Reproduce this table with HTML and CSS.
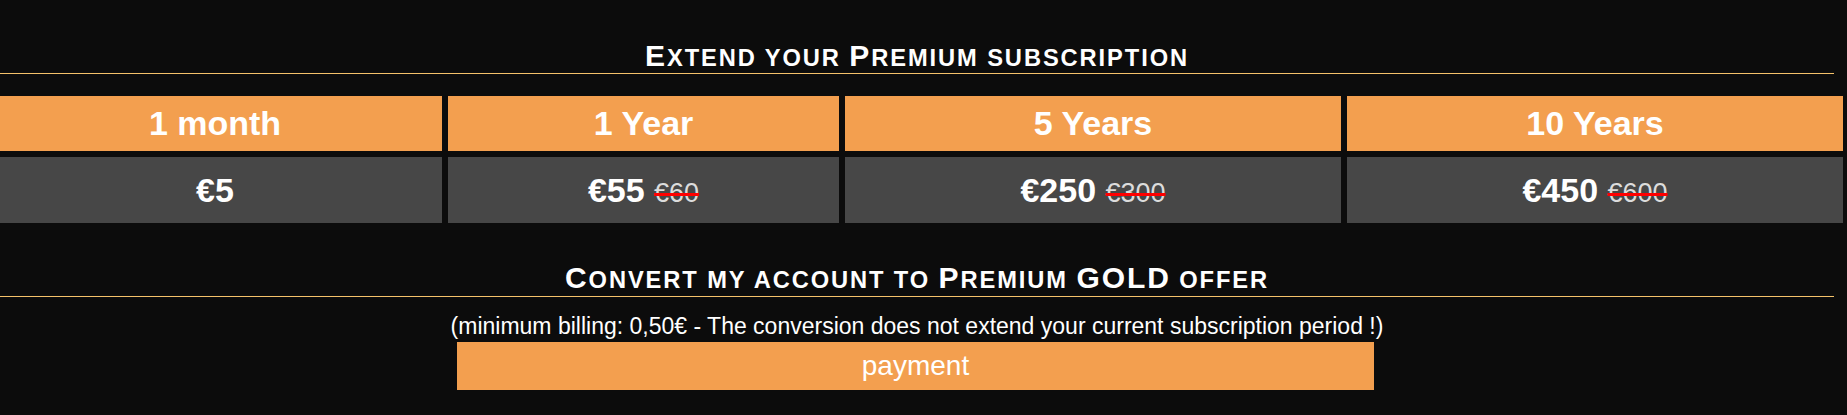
FILE: index.html
```html
<!DOCTYPE html>
<html lang="en">
<head>
<meta charset="utf-8">
<title>Premium</title>
<link rel="stylesheet" href="styles.css">
</head>
<body>
<main class="page">
  <section class="block">
    <h2 class="title">E<span class="sc">xtend your </span>P<span class="sc">remium subscription</span></h2>
    <div class="plans">
      <div class="plan-head">1 month</div>
      <div class="plan-head">1 Year</div>
      <div class="plan-head">5 Years</div>
      <div class="plan-head">10 Years</div>
      <div class="plan-price">€5</div>
      <div class="plan-price">€55 <del class="old">€60</del></div>
      <div class="plan-price">€250 <del class="old">€300</del></div>
      <div class="plan-price">€450 <del class="old">€600</del></div>
    </div>
  </section>
  <section class="block gold">
    <h2 class="title">C<span class="sc">onvert my account to </span>P<span class="sc">remium </span>GOLD<span class="sc"> offer</span></h2>
    <p class="note">(minimum billing: 0,50€ - The conversion does not extend your current subscription period !)</p>
    <button class="pay" type="button">payment</button>
  </section>
</main>
</body>
</html>
```
FILE: styles.css
```css
html, body {
  margin: 0;
  padding: 0;
  background: #0c0c0c;
  overflow: hidden;
}
body {
  font-family: "Liberation Sans", Arial, sans-serif;
  color: #fff;
}
.page {
  padding-top: 38px;
}
.title {
  width: 1834px;
  margin: 0;
  font-size: 30px;
  line-height: 35px;
  font-weight: bold;
  letter-spacing: 1.9px;
  text-align: center;
  border-bottom: 1px solid #f5c26a;
}
.sc {
  font-size: 0.79em;
  line-height: 20px;
  text-transform: uppercase;
}
.plans {
  width: 1855px;
  margin-top: 22px;
  margin-left: -12px;
  display: grid;
  grid-template-columns: 454px 391px 496px 496px;
  grid-template-rows: 55px 66px;
  gap: 6px;
}
.plan-head {
  background: #f39f4f;
  font-size: 34px;
  font-weight: bold;
  text-align: center;
  line-height: 38px;
  padding-top: 8px;
}
.plan-price {
  background: #474747;
  font-size: 34px;
  font-weight: bold;
  text-align: center;
  line-height: 38px;
  padding-top: 14px;
}
.old {
  font-size: 27px;
  font-weight: normal;
  color: #dcdcdc;
  text-decoration: line-through;
  text-decoration-color: #ff0000;
  text-decoration-thickness: 3px;
}
.gold {
  margin-top: 37px;
}
.gold .title {
  line-height: 36px;
}
.note {
  width: 1834px;
  margin: 17px 0 0;
  font-size: 23px;
  line-height: 25px;
  text-align: center;
}
.pay {
  display: block;
  width: 917px;
  height: 48px;
  margin: 3px 0 0 457px;
  padding: 0;
  border: 0;
  background: #f39f4f;
  color: #fff;
  font-family: "Liberation Sans", Arial, sans-serif;
  font-size: 28px;
}
```
